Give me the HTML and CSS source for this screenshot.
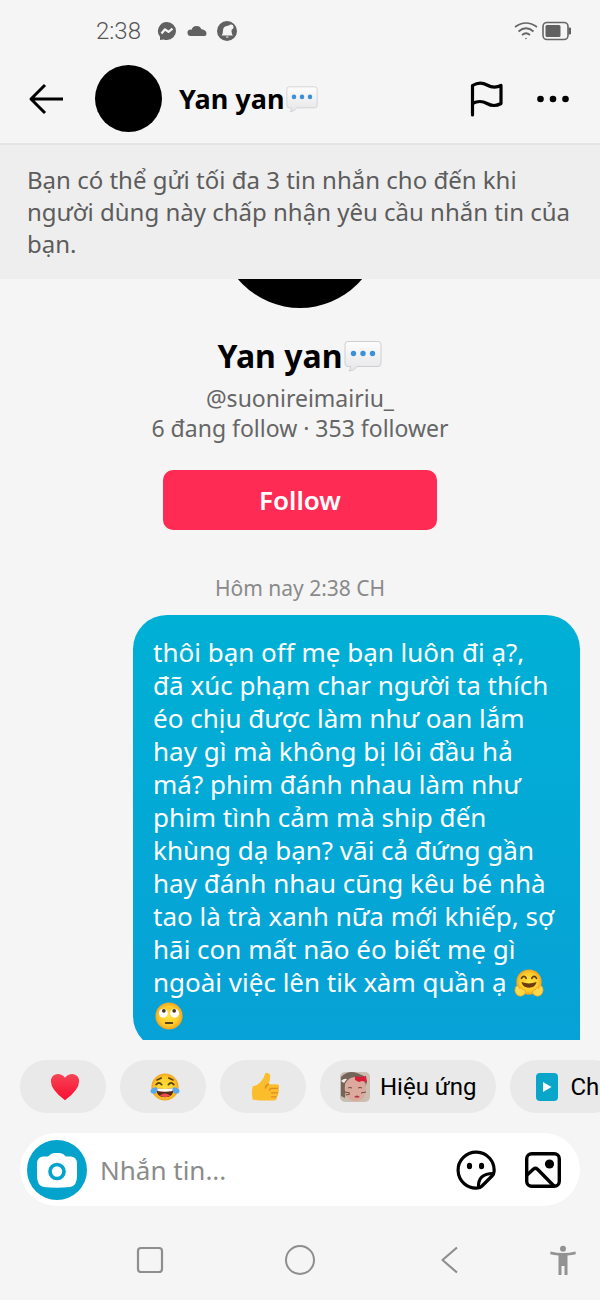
FILE: index.html
```html
<!DOCTYPE html>
<html lang="vi">
<head>
<meta charset="utf-8">
<meta name="viewport" content="width=device-width, initial-scale=1">
<title>Yan yan</title>
<link rel="stylesheet" href="styles.css">
</head>
<body>
<svg class="defs" aria-hidden="true">
  <defs>
    <linearGradient id="bubbleFill" x1="0" y1="0" x2="0" y2="1"><stop offset="0" stop-color="#fdfdfd"/><stop offset="1" stop-color="#e6e6e8"/></linearGradient>
    <linearGradient id="heartFill" x1="0" y1="0" x2="0" y2="1"><stop offset="0" stop-color="#f44455"/><stop offset="1" stop-color="#fb0d30"/></linearGradient>
    <radialGradient id="faceFill"><stop offset="0" stop-color="#ffe13d"/><stop offset=".7" stop-color="#fdcb2c"/><stop offset="1" stop-color="#f2a51f"/></radialGradient>
    <symbol id="speech" viewBox="0 0 38 32">
      <path d="M4 1.500h30q3 0 3 3v19q0 3-3 3H13q-3 4.500-8 4.500 2-2 1.500-4.500H4q-3 0-3-3v-19q0-3 3-3z" fill="url(#bubbleFill)" stroke="#cfcfd2" stroke-width="1"/>
      <g fill="#3d8fd6"><circle cx="9.500" cy="13.500" r="2.700"/><circle cx="19" cy="13.500" r="2.700"/><circle cx="28.500" cy="13.500" r="2.700"/></g>
    </symbol>
  </defs>
</svg>

<div class="status">
  <span class="clock">2:38</span>
  <svg class="status-icon" viewBox="0 0 20 20"><path d="M10 1a9 9 0 0 1 0 18q-2 0-3.500-.6L3 19v-3.300A9 9 0 0 1 10 1z" fill="#616161"/><path d="M4.500 12.500 8 8.300l3.500 2.600 4-3.200" fill="none" stroke="#f5f5f5" stroke-width="2.200" stroke-linejoin="round"/></svg>
  <svg class="status-icon" viewBox="0 0 20 20"><path d="M3.500 15a3.300 3.300 0 0 1-.5-6.500q1 0 1.500.2a5.300 5.300 0 0 1 10-.4q5 .5 5 4.500 0 2.200-2 2.200z" fill="#616161"/></svg>
  <svg class="status-icon" viewBox="0 0 20 20"><circle cx="10" cy="10" r="10" fill="#616161"/><path d="M4.500 14.500q1.500-1.500 1.500-5 0-3.500 3-4.300l2.500-.7 3.500 2.500-.5 3q0 3 1.500 4.500zM9 15.500h2.500v1H9z" fill="#f5f5f5"/><circle cx="14" cy="6" r="2.500" fill="#f5f5f5"/></svg>
  <span class="grow"></span>
  <svg class="wifi" viewBox="0 0 24 20" fill="none" stroke="#666" stroke-width="1.700"><path d="M1 6Q12-2 23 6M4.500 10.500Q12 4 19.500 10.500M8 14q4-3.500 8 0"/><circle cx="12" cy="17.500" r=".8" fill="#666" stroke="none"/></svg>
  <svg class="battery" viewBox="0 0 30 20"><rect x="1" y="1.500" width="25" height="17" rx="4" fill="none" stroke="#666" stroke-width="1.600"/><rect x="3.500" y="4" width="15" height="12" rx="1.500" fill="#616161"/><path d="M27 7h1.500v6H27z" fill="#616161" stroke="#616161"/></svg>
</div>

<header class="header">
  <button class="icon-btn" aria-label="Quay lại"><svg class="i36" viewBox="0 0 36 36" fill="none" stroke="#000" stroke-width="3"><path d="M35 18H3M17 4 3 18l14 14" stroke-linejoin="round"/></svg></button>
  <span class="avatar"></span>
  <h1 class="name">Yan yan<svg class="speech-sm" role="img" aria-label="💬"><use href="#speech"/></svg></h1>
  <button class="icon-btn" aria-label="Báo cáo"><svg class="i36" viewBox="0 0 36 36" fill="none" stroke="#000" stroke-width="3.200" stroke-linecap="round" stroke-linejoin="round"><path d="M3.500 34V4.500Q11 0 18 4q7 4 14 .500v18q-7 4-14 0t-14.500 0"/></svg></button>
  <button class="icon-btn" aria-label="Thêm"><svg class="i36" viewBox="0 0 36 36"><circle cx="5.500" cy="18" r="3.300"/><circle cx="18" cy="18" r="3.300"/><circle cx="30.500" cy="18" r="3.300"/></svg></button>
</header>

<p class="notice">Bạn có thể gửi tối đa 3 tin nhắn cho đến khi người dùng này chấp nhận yêu cầu nhắn tin của bạn.</p>

<main class="chat">
  <section class="profile">
    <span class="photo"></span>
    <h2 class="profile-name">Yan yan<svg class="speech-lg" role="img" aria-label="💬"><use href="#speech"/></svg></h2>
    <p class="meta">@suonireimairiu_</p>
    <p class="meta">6 đang follow · 353 follower</p>
    <button class="follow">Follow</button>
  </section>
  <time class="time">Hôm nay 2:38 CH</time>
  <p class="message">thôi bạn off mẹ bạn luôn đi ạ?,<br>đã xúc phạm char người ta thích<br>éo chịu được làm như oan lắm<br>hay gì mà không bị lôi đầu hả<br>má? phim đánh nhau làm như<br>phim tình cảm mà ship đến<br>khùng dạ bạn? vãi cả đứng gần<br>hay đánh nhau cũng kêu bé nhà<br>tao là trà xanh nữa mới khiếp, sợ<br>hãi con mất não éo biết mẹ gì<br>ngoài việc lên tik xàm quần ạ <svg class="emoji" viewBox="0 0 32 32" role="img" aria-label="🤗"><circle cx="16" cy="15" r="13.500" fill="url(#faceFill)"/><path d="M8 11q2.500-4 5 0M19 11q2.500-4 5 0" fill="none" stroke="#5f4012" stroke-width="1.800" stroke-linecap="round"/><path d="M8 15q8 3 16 0-1 6-8 6t-8-6z" fill="#6b3a10"/><path d="M3 19q2-1 3 3l1-1q2 0 2 2l3 1q1 5-5 6-5 0-6-6 0-4 2-5zM29 19q-2-1-3 3l-1-1q-2 0-2 2l-3 1q-1 5 5 6 5 0 6-6 0-4-2-5z" fill="#ffd84a" stroke="#eda02a" stroke-width=".8"/></svg><br><svg class="emoji" viewBox="0 0 32 32" role="img" aria-label="🙄"><circle cx="16" cy="16" r="14.500" fill="url(#faceFill)"/><circle cx="10" cy="13" r="4.800" fill="#fff"/><circle cx="22" cy="13" r="4.800" fill="#fff"/><circle cx="10.500" cy="10.500" r="2" fill="#4a3320"/><circle cx="21.500" cy="10.500" r="2" fill="#4a3320"/><path d="M12.500 23.500h7" stroke="#5f4012" stroke-width="2" stroke-linecap="round"/></svg></p>
</main>

<div class="chips">
  <button class="chip chip-emoji" aria-label="❤️"><svg class="emoji" viewBox="0 0 32 32"><path d="M16 30Q1 19 1 10q0-7 7-8 5 0 8 4 3-4 8-4 7 1 7 8 0 9-15 20z" fill="url(#heartFill)"/></svg></button>
  <button class="chip chip-emoji" aria-label="😂"><svg class="emoji" viewBox="0 0 32 32"><circle cx="16" cy="16" r="14.500" fill="url(#faceFill)"/><path d="M7.500 8.500 12 6.500M20 6.500l4.500 2M6.500 13.500q3-4 6 0M19.500 13.500q3-4 6 0" fill="none" stroke="#5f4012" stroke-width="1.800" stroke-linecap="round"/><path d="M6.500 17q9.500 2 19 0 0 10-9.500 10T6.500 17z" fill="#5b2a16"/><path d="M7.500 17.300q8.500 1.700 17 0l-.5 3q-8 1.500-16 0z" fill="#fff"/><path d="M10.500 25q5.500-4 11 0-5 3.500-11 0z" fill="#ef4b54"/><path d="M7 16q2 5-1.500 7-4 1-5-2-.5-4 6.500-5zM25 16q-2 5 1.500 7 4 1 5-2 .5-4-6.500-5z" fill="#58a9ec"/></svg></button>
  <button class="chip chip-emoji" aria-label="👍"><svg class="emoji" viewBox="0 0 32 32"><path d="M3 15q4 0 8-4 4-4 5-9 1-2 3-1 3 1 2.500 5L20 13h8q3 0 3 2.500 0 1.500-1 2 1 1 1 2.500t-1.500 2.300q.8 1 .5 2.200-.3 1.500-1.700 2 .5 1 .2 2-.5 2-3.500 2H10l-7-1q-2-7 0-14.500z" fill="#fcbd2d"/><path d="M29.500 17.500H23q-2 0-2 2M29.500 22.300H23M28 26.500h-5M20 13q-3 1-3.500 4" fill="none" stroke="#df8a22" stroke-width="1.500" stroke-linecap="round"/></svg></button>
  <button class="chip chip-wide"><svg class="emoji" viewBox="0 0 30 30"><rect width="30" height="30" rx="5" fill="#cbbfb2"/><path d="M1 5Q8-2 17 1l7 3 3 6-2 6-14-9-5 6-1 13-4-2z" fill="#74655a"/><path d="M5 12q4-8 12-7 9 1 9 11 0 12-8 13-9 1-12-6-2-6-1-11z" fill="#dcaa9d"/><path d="m15 4 5 1 6-1 1 6-5-1-3 1-4-2z" fill="#d71f37"/><path d="M8 16q2-1 4 0M18 16q2-1 4 0M5 20l5 1M6 23l4-1M21 21l5-1" fill="none" stroke="#6b4a40" stroke-width="1"/><path d="M14 25q3-3 6 0-3 1.500-6 0z" fill="#b3364a"/><path d="M1 9q3-3 6-2l-3 4z" fill="#f3ece7"/></svg>Hiệu ứng</button>
  <button class="chip chip-wide chip-share"><svg class="card" viewBox="0 0 22 28"><rect width="22" height="28" rx="4" fill="#0aa6c9"/><path d="m7 9 8.500 5L7 19z" fill="#fff"/></svg>Ch</button>
</div>

<form class="composer">
  <button type="button" class="camera" aria-label="Máy ảnh"><svg class="camera-art" viewBox="0 0 42 36"><path d="M7 4.500h5Q15 1 18 1h6q3 0 6 3.500h5q6 1 6 7V24q0 10-7 11-13 1.500-26 0-7-1-7-11V11.500q0-6 6-7z" fill="#fff"/><circle cx="21" cy="19.500" r="7" fill="none" stroke="#04a3cb" stroke-width="3.600"/></svg></button>
  <input class="field" type="text" aria-label="Nhắn tin" placeholder="Nhắn tin...">
  <button type="button" class="tool" aria-label="Nhãn dán"><svg class="i40" viewBox="0 0 40 40" fill="none" stroke="#000" stroke-width="3.200" stroke-linejoin="round"><path d="M38 22A18 18 0 1 0 22 38q2 0 4-2L36 26q2-2 2-4z"/><path d="M22.500 38q-1-15 15.500-14.500"/><ellipse cx="13.500" cy="16" rx="2.600" ry="3.200" fill="#000" stroke="none"/><ellipse cx="25.500" cy="16" rx="2.600" ry="3.200" fill="#000" stroke="none"/></svg></button>
  <button type="button" class="tool" aria-label="Hình ảnh"><svg class="i40" viewBox="0 0 40 40" fill="none" stroke="#000" stroke-width="3.400"><rect x="3.700" y="3.700" width="32.600" height="32.600" rx="5"/><circle cx="26.500" cy="14" r="4.600" fill="#000" stroke="none"/><path d="m4 25 6.500-6q2-1.500 4 .3L31 36" stroke-linejoin="round"/></svg></button>
</form>

<nav class="nav">
  <button class="nav-btn" aria-label="Gần đây"><svg class="i30" viewBox="0 0 30 30"><rect x="3" y="3" width="24" height="24" rx="3" fill="none" stroke="#8e8e8e" stroke-width="2.200"/></svg></button>
  <button class="nav-btn" aria-label="Trang chủ"><svg class="i30" viewBox="0 0 30 30"><circle cx="15" cy="15" r="14" fill="none" stroke="#8e8e8e" stroke-width="2"/></svg></button>
  <button class="nav-btn" aria-label="Trở về"><svg class="i30" viewBox="0 0 30 30"><path d="M22 2.500 7.500 15 22 27.500" fill="none" stroke="#8e8e8e" stroke-width="2.200" stroke-linejoin="round"/></svg></button>
  <button class="nav-btn" aria-label="Trợ năng"><svg class="i30" viewBox="0 0 30 30" fill="#929292"><circle cx="15" cy="3.700" r="3"/><path d="M2.500 6.500Q15 9.500 27.500 6.500l.3 2.700q-4 1-8.300 1.300V30h-3v-9h-3v9h-3V10.500q-4.300-.3-8.300-1.300z"/></svg></button>
</nav>
</body>
</html>
```
FILE: styles.css
```css
* { box-sizing: border-box; }
body {
  margin: 0;
  height: 100vh;
  display: flex;
  flex-direction: column;
  background: #f5f5f5;
  color: #000;
  font-family: "Noto Sans", Roboto, sans-serif;
  overflow: hidden;
}
button {
  border: 0;
  padding: 0;
  background: none;
  font: inherit;
  color: inherit;
  cursor: pointer;
}
p, h1, h2 { margin: 0; }
svg { display: block; flex: none; }
.defs { position: absolute; width: 0; height: 0; }
.grow { flex: 1; }
.i30 { width: 30px; height: 30px; }
.i36 { width: 36px; height: 36px; }
.i40 { width: 40px; height: 40px; }
.emoji { width: 30px; height: 30px; }

.status {
  display: flex;
  align-items: center;
  gap: 10px;
  height: 60px;
  padding: 4px 28px 2px 96px;
  font: 300 24px Roboto, sans-serif;
  color: #555;
}
.clock { margin-right: 6px; }
.status-icon { width: 20px; height: 20px; }
.wifi { width: 24px; height: 20px; margin-right: -6px; }
.battery { width: 30px; height: 20px; }

.header {
  display: flex;
  align-items: center;
  height: 85px;
  padding: 0 29px 6px 28px;
  border-bottom: 2px solid #e4e4e4;
}
.avatar { width: 67px; height: 67px; margin: 0 17px 0 31px; border-radius: 50%; background: #000; }
.name { flex: 1; display: flex; align-items: center; gap: 2px; font-size: 27px; line-height: 32px; font-weight: 700; }
.speech-sm { width: 32px; height: 28px; }
.header .icon-btn + .icon-btn { margin-left: 30px; }

.notice {
  padding: 19px 18px 19px 27px;
  background: #eee;
  color: #5c5c5c;
  font-size: 24px;
  line-height: 32px;
}

.chat {
  flex: 1;
  min-height: 0;
  overflow: hidden;
  display: flex;
  flex-direction: column;
}
.profile { flex: none; display: flex; flex-direction: column; align-items: center; }
.photo { width: 162px; height: 162px; margin-top: -133px; border-radius: 50%; background: #000; }
.profile-name { display: flex; align-items: center; gap: 2px; margin: 28px 0 7px; font-size: 32px; line-height: 40px; }
.speech-lg { width: 38px; height: 32px; }
.meta { font-size: 23px; line-height: 30px; color: #666; }
.follow {
  width: 274px;
  height: 60px;
  margin-top: 27px;
  border-radius: 10px;
  background: #fe2c55;
  color: #fff;
  font-size: 26px;
  font-weight: 600;
}
.time { flex: none; margin: 46px 0 14px; text-align: center; font-size: 21px; line-height: 25px; color: #8a8a8a; }
.message {
  flex: none;
  align-self: flex-end;
  width: 447px;
  max-width: 80%;
  margin-right: 20px;
  padding: 21px 20px 18px;
  border-radius: 34px 34px 8px 34px;
  background: linear-gradient(#00b0d5, #07a1d6);
  color: #fff;
  font-size: 26px;
  line-height: 33px;
  white-space: nowrap;
}
.message .emoji { display: inline-block; vertical-align: -6px; width: 32px; }

.chips { display: flex; gap: 14px; padding: 20px 0 20px 20px; overflow: hidden; }
.chip {
  flex: none;
  display: flex;
  align-items: center;
  gap: 10px;
  height: 53px;
  border-radius: 27px;
  background: #e9e9e9;
  font: 24px Roboto, sans-serif;
}
.chip-emoji { width: 86px; padding-left: 30px; }
.chip-wide { padding: 0 20px; }
.chip-share { padding-left: 26px; gap: 12px; }
.card { width: 22px; height: 28px; }

.composer {
  display: flex;
  align-items: center;
  height: 73px;
  margin: 0 20px;
  padding: 0 17px 0 7px;
  border-radius: 37px;
  background: #fff;
}
.camera { display: grid; place-items: center; width: 60px; height: 60px; border-radius: 50%; background: #04a3cb; }
.camera-art { width: 42px; height: 36px; }
.field {
  flex: 1;
  min-width: 0;
  margin-left: 13px;
  padding: 0;
  border: 0;
  outline: 0;
  background: none;
  font: 26px "Noto Sans", Roboto, sans-serif;
}
.field::placeholder { color: #8b8b8b; opacity: 1; }
.tool { margin-left: 27px; }

.nav {
  display: grid;
  grid-template-columns: 2fr 2fr 2fr 1fr;
  align-items: center;
  justify-items: center;
  height: 94px;
  padding: 14px 0 0 12.5%;
}
```
